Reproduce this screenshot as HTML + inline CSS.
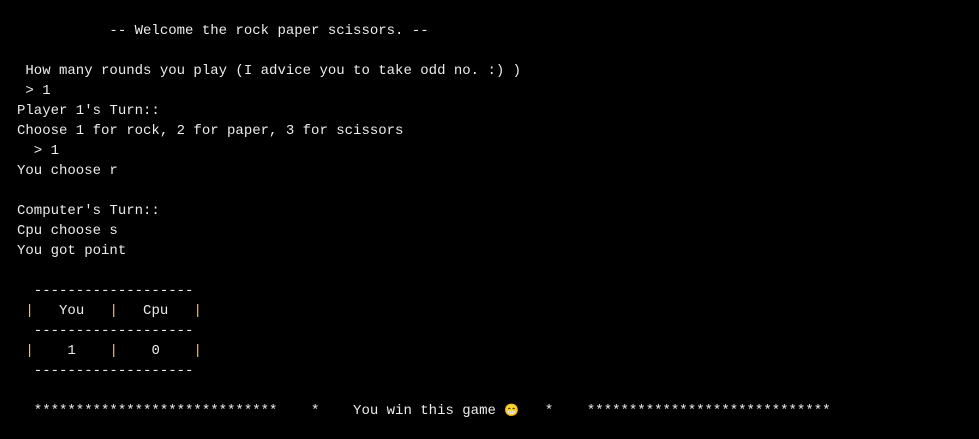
<!DOCTYPE html>
<html><head><meta charset="utf-8"><style>
html,body{margin:0;padding:0;background:#000;width:979px;height:439px;overflow:hidden}
pre{margin:0;padding:21px 0 0 17px;font-family:"Liberation Mono","Courier New",monospace;font-size:14px;line-height:20px;color:#ececec;}
.p{color:#e8c48a}
.e{display:inline-block;width:7px;font-size:12px;overflow:visible}
</style></head><body><pre>           -- Welcome the rock paper scissors. --

 How many rounds you play (I advice you to take odd no. :) )
 &gt; 1
Player 1's Turn::
Choose 1 for rock, 2 for paper, 3 for scissors
  &gt; 1
You choose r

Computer's Turn::
Cpu choose s
You got point

  -------------------
 <span class="p">|</span>   You   <span class="p">|</span>   Cpu   <span class="p">|</span>
  -------------------
 <span class="p">|</span>    1    <span class="p">|</span>    0    <span class="p">|</span>
  -------------------

  *****************************    *    You win this game <span class="e">😁</span>    *    *****************************</pre></body></html>
